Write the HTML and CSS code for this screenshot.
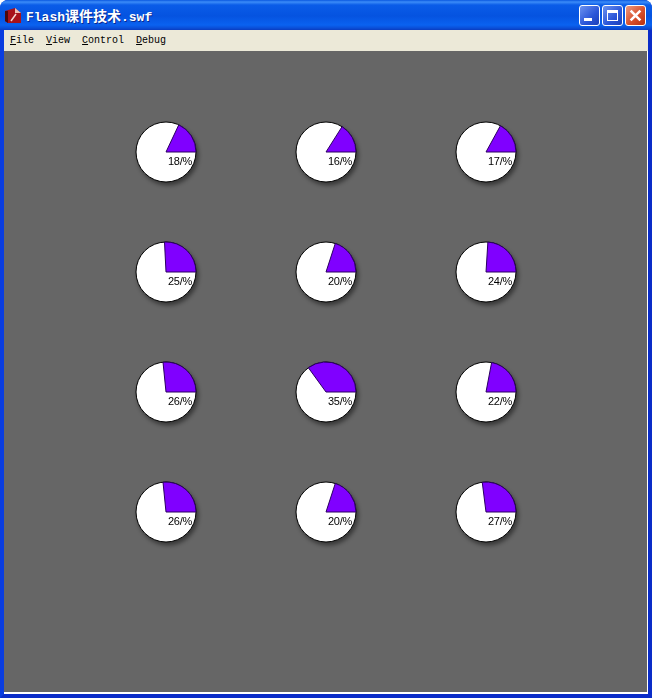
FILE: index.html
```html
<!DOCTYPE html>
<html lang="en">
<head>
    <meta charset="UTF-8">
    <title>Flash课件技术.swf</title>
    <link rel="stylesheet" href="styles.css">
</head>
<body>
    <div class="window">
        <div class="titlebar">
            <svg class="app-icon" viewBox="0 0 16 16">
                <path d="M0 4 L10 1 L16 6 L16 16 L3 16 L0 14 Z" fill="#a8121a"/>
                <path d="M10 1 L10 6 L16 6 Z" fill="#f0c0b0"/>
                <path d="M0 4 L3 4 L3 16 L0 14 Z" fill="#4c080c"/>
                <path d="M6 14 L11 7" fill="none" stroke="#f6d8d0" stroke-width="1.5"/>
            </svg>
            <span class="title">Flash<span class="cjk">课件技术</span>.swf</span>
            <div class="controls">
                <div class="ctl ctl-min"><i></i></div>
                <div class="ctl ctl-max"><i></i></div>
                <div class="ctl ctl-close">
                    <svg viewBox="0 0 12 12"><path d="M1.5 1.5 L10.5 10.5 M10.5 1.5 L1.5 10.5" stroke="#fff" stroke-width="2.4" fill="none"/></svg>
                </div>
            </div>
        </div>
        <div class="menubar">
            <span class="menu"><u>F</u>ile</span>
            <span class="menu"><u>V</u>iew</span>
            <span class="menu"><u>C</u>ontrol</span>
            <span class="menu"><u>D</u>ebug</span>
        </div>
        <div class="stage">
            <div class="pies">
                <svg class="pie" viewBox="-35 -35 70 70"><circle r="30"/><path d="M0 0 L30 0 A30 30 0 0 0 12.77 -27.14 Z"/><text x="2" y="13">18/%</text></svg>
                <svg class="pie" viewBox="-35 -35 70 70"><circle r="30"/><path d="M0 0 L30 0 A30 30 0 0 0 16.07 -25.33 Z"/><text x="2" y="13">16/%</text></svg>
                <svg class="pie" viewBox="-35 -35 70 70"><circle r="30"/><path d="M0 0 L30 0 A30 30 0 0 0 14.45 -26.29 Z"/><text x="2" y="13">17/%</text></svg>
                <svg class="pie" viewBox="-35 -35 70 70"><circle r="30"/><path d="M0 0 L30 0 A30 30 0 0 0 -1.5 -30 Z"/><text x="2" y="13">25/%</text></svg>
                <svg class="pie" viewBox="-35 -35 70 70"><circle r="30"/><path d="M0 0 L30 0 A30 30 0 0 0 9.27 -28.53 Z"/><text x="2" y="13">20/%</text></svg>
                <svg class="pie" viewBox="-35 -35 70 70"><circle r="30"/><path d="M0 0 L30 0 A30 30 0 0 0 1.88 -29.94 Z"/><text x="2" y="13">24/%</text></svg>
                <svg class="pie" viewBox="-35 -35 70 70"><circle r="30"/><path d="M0 0 L30 0 A30 30 0 0 0 -3 -29.85 Z"/><text x="2" y="13">26/%</text></svg>
                <svg class="pie" viewBox="-35 -35 70 70"><circle r="30"/><path d="M0 0 L30 0 A30 30 0 0 0 -17.63 -24.27 Z"/><text x="2" y="13">35/%</text></svg>
                <svg class="pie" viewBox="-35 -35 70 70"><circle r="30"/><path d="M0 0 L30 0 A30 30 0 0 0 5.62 -29.47 Z"/><text x="2" y="13">22/%</text></svg>
                <svg class="pie" viewBox="-35 -35 70 70"><circle r="30"/><path d="M0 0 L30 0 A30 30 0 0 0 -3 -29.85 Z"/><text x="2" y="13">26/%</text></svg>
                <svg class="pie" viewBox="-35 -35 70 70"><circle r="30"/><path d="M0 0 L30 0 A30 30 0 0 0 9.27 -28.53 Z"/><text x="2" y="13">20/%</text></svg>
                <svg class="pie" viewBox="-35 -35 70 70"><circle r="30"/><path d="M0 0 L30 0 A30 30 0 0 0 -3.76 -29.76 Z"/><text x="2" y="13">27/%</text></svg>
            </div>
        </div>
    </div>
</body>
</html>
```

FILE: styles.css
```css
html, body {
    margin: 0;
    height: 100%;
    overflow: hidden;
}

.window {
    width: 652px;
    height: 698px;
    box-sizing: border-box;
    display: flex;
    flex-direction: column;
    background-color: #0831d9;
    border-left: 4px solid #0a3de0;
    border-right: 4px solid #0a2cc8;
    border-bottom: 4px solid #0a2cc8;
    border-radius: 8px 8px 0 0;
}

.titlebar {
    height: 30px;
    margin: 0 -4px;
    flex: none;
    display: flex;
    align-items: center;
    padding: 0 6px 0 5px;
    border-radius: 8px 8px 0 0;
    background: linear-gradient(to bottom, #0a58e0 0, #3c8cf8 2px, #0a5ce8 5px, #0553e0 16px, #0a62f0 25px, #0a4fd8 28px, #0a3cc0 30px);
}

.app-icon {
    width: 16px;
    height: 16px;
    margin-right: 5px;
}

.title {
    font-family: "Liberation Mono", monospace;
    font-weight: bold;
    font-size: 13px;
    color: #fff;
    text-shadow: 1px 1px 0 #0a2a90;
}

.cjk {
    font-family: "Noto Sans CJK SC", sans-serif;
    font-size: 14px;
}

.controls {
    margin-left: auto;
    display: flex;
    gap: 2px;
}

.ctl {
    width: 21px;
    height: 21px;
    box-sizing: border-box;
    border: 1px solid #fff;
    border-radius: 3px;
    background: linear-gradient(135deg, #6c92f0, #2a55d8 60%, #1c40b8);
    display: flex;
}

.ctl-min i {
    width: 8px;
    height: 3px;
    margin: 12px 0 0 4px;
    background-color: #fff;
}

.ctl-max i {
    margin: 4px;
    border: 1px solid #fff;
    border-top-width: 3px;
    box-sizing: border-box;
    flex: 1;
}

.ctl-close {
    background: linear-gradient(135deg, #ec9a80, #d8502c 55%, #b83010);
}

.ctl-close svg {
    width: 13px;
    height: 13px;
    margin: 3px;
}

.menubar {
    height: 21px;
    flex: none;
    display: flex;
    align-items: center;
    gap: 12px;
    padding-left: 6px;
    background-color: #ece9d8;
    font-family: "Liberation Mono", monospace;
    font-size: 10px;
    color: #000;
}

.stage {
    flex: 1;
    background-color: #666;
    border-bottom: 2px solid #fff;
    border-right: 1px solid #fff;
    padding: 66px 0 0 127px;
}

.pies {
    display: grid;
    grid-template-columns: repeat(3, 70px);
    grid-auto-rows: 70px;
    column-gap: 90px;
    row-gap: 50px;
}

.pie {
    width: 70px;
    height: 70px;
    overflow: visible;
}

.pie circle {
    fill: #fff;
    stroke: #000;
    stroke-width: 1;
    filter: drop-shadow(2px 3px 2px rgba(0, 0, 0, 0.45));
}

.pie path {
    fill: #8000ff;
    stroke: #2a0060;
    stroke-width: 1;
}

.pie text {
    font-family: "Liberation Sans", sans-serif;
    font-size: 11px;
    letter-spacing: -0.3px;
    fill: #000;
    opacity: 0.99;
}
```
